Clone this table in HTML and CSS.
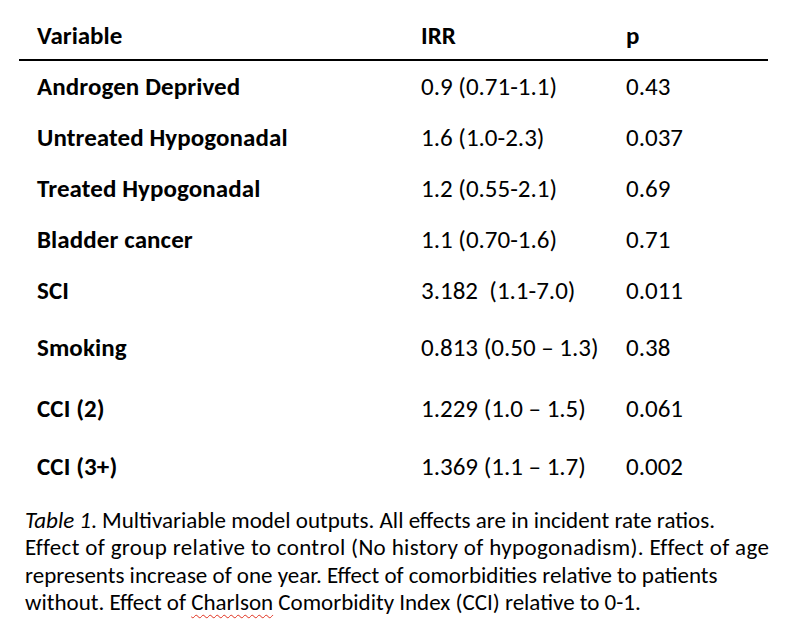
FILE: index.html
```html
<!DOCTYPE html>
<html>
<head>
<meta charset="utf-8">
<link rel="stylesheet" href="styles.css">
</head>
<body>
<div class="table">
  <div class="row head">
    <div class="cell">Variable</div>
    <div class="cell">IRR</div>
    <div class="cell">p</div>
  </div>
  <div class="row">
    <div class="cell var">Androgen Deprived</div>
    <div class="cell">0.9 (0.71-1.1)</div>
    <div class="cell">0.43</div>
  </div>
  <div class="row">
    <div class="cell var">Untreated Hypogonadal</div>
    <div class="cell">1.6 (1.0-2.3)</div>
    <div class="cell">0.037</div>
  </div>
  <div class="row">
    <div class="cell var">Treated Hypogonadal</div>
    <div class="cell">1.2 (0.55-2.1)</div>
    <div class="cell">0.69</div>
  </div>
  <div class="row">
    <div class="cell var">Bladder cancer</div>
    <div class="cell">1.1 (0.70-1.6)</div>
    <div class="cell">0.71</div>
  </div>
  <div class="row">
    <div class="cell var">SCI</div>
    <div class="cell">3.182&nbsp; (1.1-7.0)</div>
    <div class="cell">0.011</div>
  </div>
  <div class="row narrow r6">
    <div class="cell var">Smoking</div>
    <div class="cell">0.813 (0.50 – 1.3)</div>
    <div class="cell">0.38</div>
  </div>
  <div class="row narrow r7">
    <div class="cell var">CCI (2)</div>
    <div class="cell">1.229 (1.0 – 1.5)</div>
    <div class="cell">0.061</div>
  </div>
  <div class="row narrow r8">
    <div class="cell var">CCI (3+)</div>
    <div class="cell">1.369 (1.1 – 1.7)</div>
    <div class="cell">0.002</div>
  </div>
</div>
<p class="caption"><em>Table 1</em>. Multivariable model outputs. All effects are in incident rate ratios.<br><span class="l2">Effect of group relative to control (No history of hypogonadism). Effect of age</span><br>represents increase of one year. Effect of comorbidities relative to patients<br>without. Effect of <span class="spell">Charlson</span> Comorbidity Index (CCI) relative to 0-1.</p>
</body>
</html>
```
FILE: styles.css
```css
html, body {
  margin: 0;
  padding: 0;
  background: #fff;
}
body {
  font-family: Carlito, Lato, "Open Sans", sans-serif;
  color: #000;
  width: 786px;
  height: 624px;
  overflow: hidden;
}
.table {
  margin: 0 18px 0 19px;
}
.row {
  display: grid;
  grid-template-columns: 402px 205px 1fr;
  align-items: center;
  height: 51px;
  font-size: 25px;
  line-height: 30px;
}
.row .cell:first-child {
  padding-left: 18px;
}
.head {
  height: 61px;
  padding-top: 12px;
  box-sizing: border-box;
  font-weight: 700;
  border-bottom: 2px solid #000;
}
.var {
  font-weight: 700;
  letter-spacing: 0.1px;
}
.r6 { height: 64px; }
.r7 { height: 58px; }
.r8 { height: 58px; }
.caption {
  margin: 11px 0 0 25px;
  font-size: 23px;
  line-height: 27.3px;
}
.l2 {
  letter-spacing: 0.35px;
}
.spell {
  text-decoration: underline wavy #e0301e;
  text-decoration-thickness: 1px;
  text-underline-offset: 4px;
}
```
